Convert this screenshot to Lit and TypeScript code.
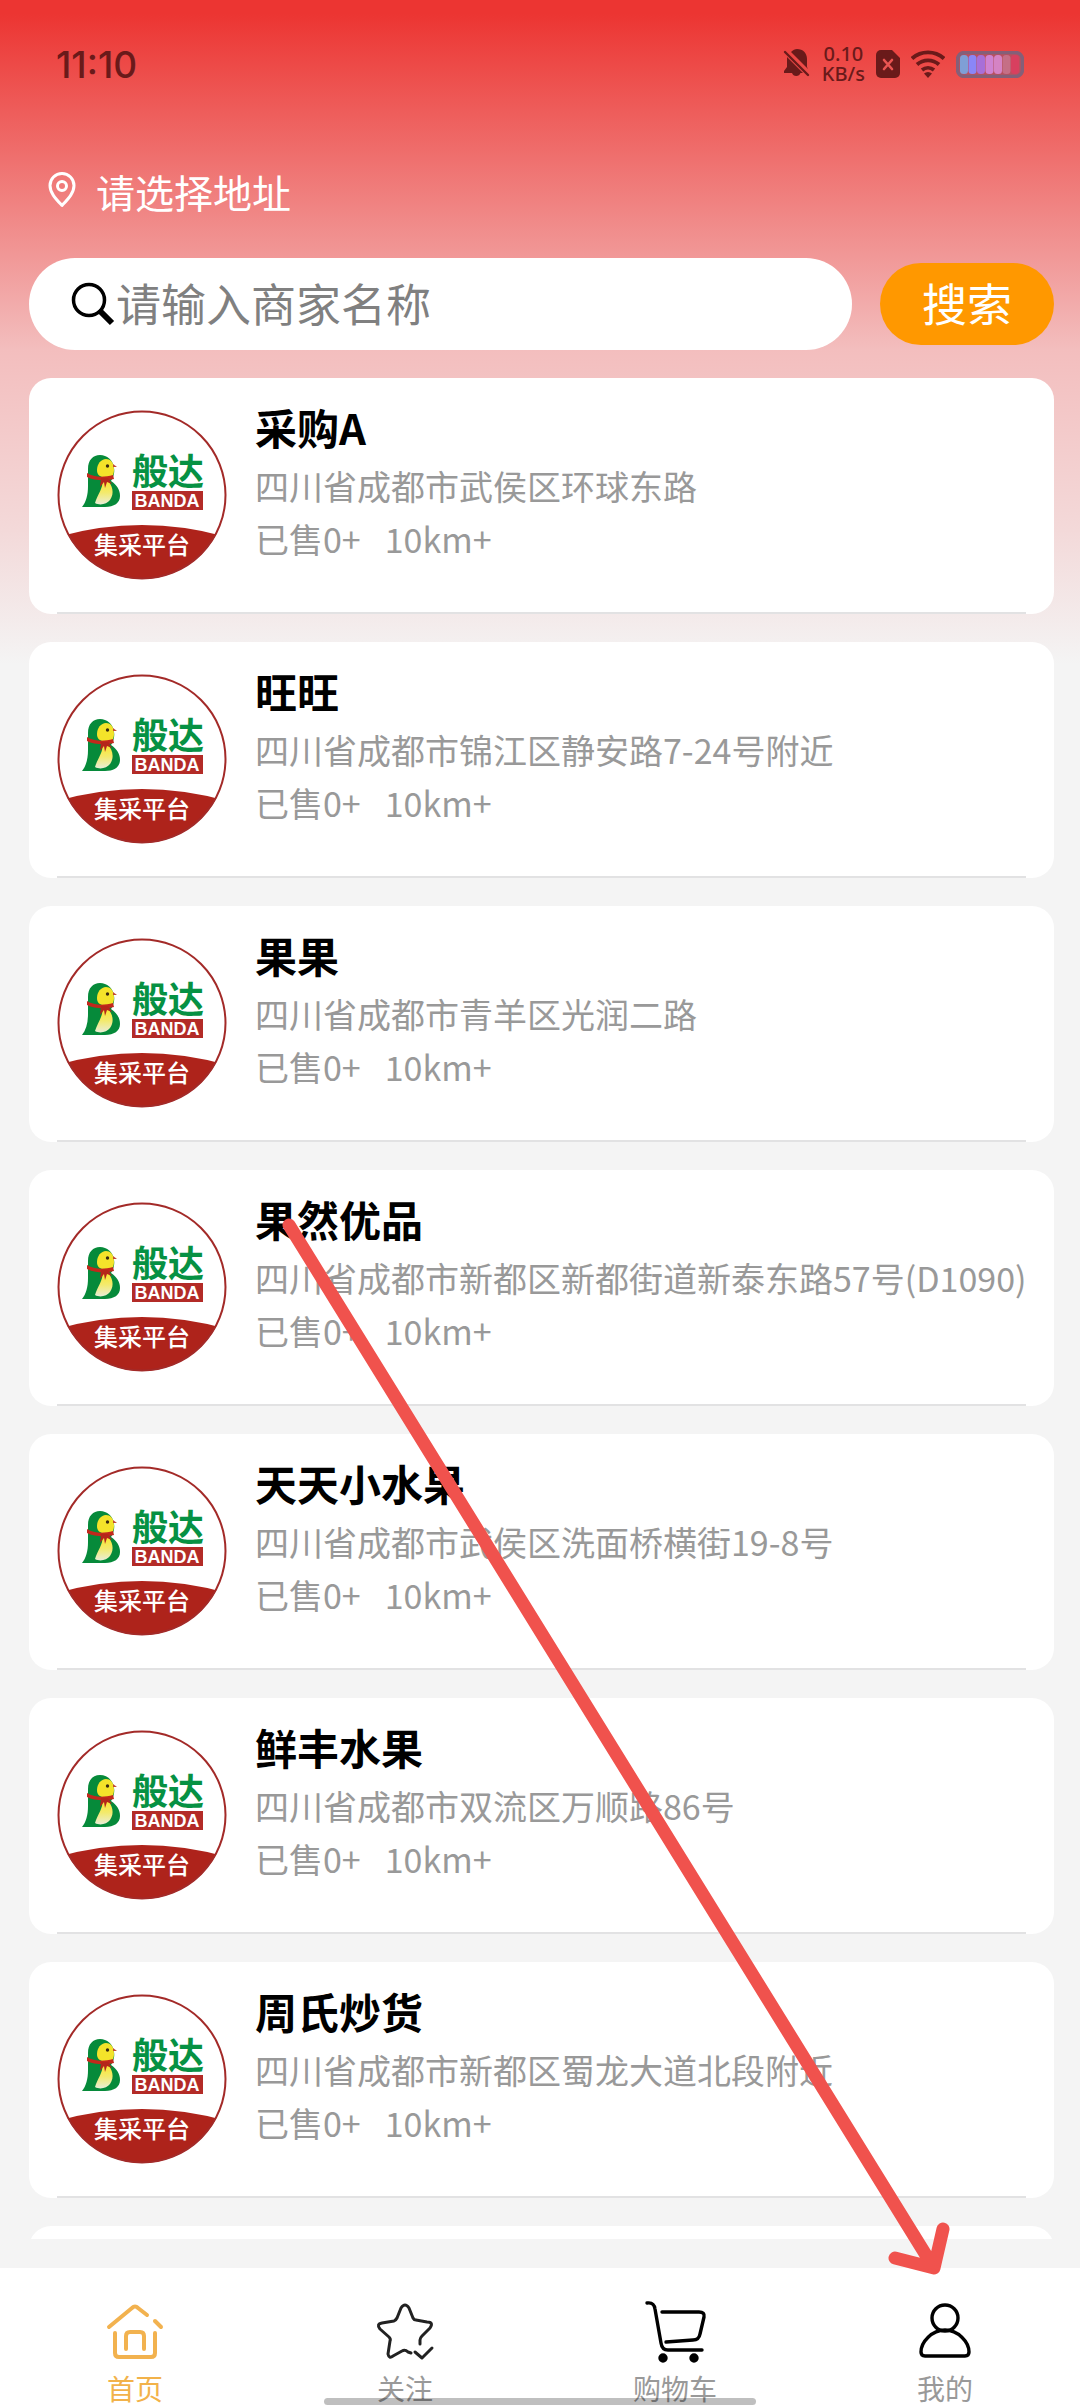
import { LitElement, css, html, svg } from 'lit'
import { customElement, property, state } from 'lit/decorators.js'
import { classMap } from 'lit/directives/class-map.js'

interface Shop {
  name: string
  address: string
}

interface Tab {
  key: string
  label: string
}

const SHOPS: Shop[] = [
  { name: '采购A', address: '四川省成都市武侯区环球东路' },
  { name: '旺旺', address: '四川省成都市锦江区静安路7-24号附近' },
  { name: '果果', address: '四川省成都市青羊区光润二路' },
  { name: '果然优品', address: '四川省成都市新都区新都街道新泰东路57号(D1090)' },
  { name: '天天小水果', address: '四川省成都市武侯区洗面桥横街19-8号' },
  { name: '鲜丰水果', address: '四川省成都市双流区万顺路86号' },
  { name: '周氏炒货', address: '四川省成都市新都区蜀龙大道北段附近' },
]

const TABS: Tab[] = [
  { key: 'home', label: '首页' },
  { key: 'follow', label: '关注' },
  { key: 'cart', label: '购物车' },
  { key: 'mine', label: '我的' },
]

const BATTERY_COLORS = ['#7f9fd6', '#8a86f7', '#a86fd8', '#cf83d2', '#d583c4', '#c56f86', '#d8405f']

@customElement('status-bar')
export class StatusBar extends LitElement {
  static styles = css`
    :host {
      display: flex;
      align-items: center;
      justify-content: space-between;
      height: 128px;
      padding: 0 56px;
      color: #6a1a1a;
    }

    .time {
      font-family: Inter, sans-serif;
      font-size: 37px;
      font-weight: 500;
    }

    .icons {
      display: flex;
      align-items: center;
      gap: 11px;
    }

    .speed {
      display: flex;
      flex-direction: column;
      align-items: center;
      font-family: 'Noto Sans', sans-serif;
      font-size: 20px;
      font-weight: 500;
      line-height: 20px;
    }

    svg {
      display: block;
    }
  `

  render() {
    return html`
      <span class="time">11:10</span>
      <div class="icons">
        <svg width="28" height="30" viewBox="0 0 28 30" fill="currentColor">
          <path d="M8 3C10 1 12 0 14 0c6 0 10 4 10 10v8l1 2Z" />
          <path d="M4 8l16 16h-2.5a4.5 4.5 0 0 1-8.500 0H1v-2l3-4Z" />
          <path d="M2 3l23 23" stroke="currentColor" stroke-width="2.4" stroke-linecap="round" />
        </svg>
        <div class="speed"><span>0.10</span><span>KB/s</span></div>
        <svg width="24" height="28" viewBox="0 0 24 28">
          <path d="M5 0h11l8 8v15a5 5 0 0 1-5 5H5a5 5 0 0 1-5-5V5a5 5 0 0 1 5-5Z" fill="currentColor" />
          <path d="M8 10l8 9M16 10l-8 9" stroke="#ea5552" stroke-width="2.6" stroke-linecap="round" />
        </svg>
        <svg width="34" height="28" viewBox="0 0 34 28" fill="none" stroke="currentColor" stroke-width="3.8">
          <path d="M1 8.5a24 24 0 0 1 32 0" />
          <path d="M6 14.5a16.5 16.5 0 0 1 22 0" />
          <path d="M11 20a9.5 9.5 0 0 1 12 0" />
          <path d="M17 28l-4-4.5a6 6 0 0 1 8 0Z" fill="currentColor" stroke="none" />
        </svg>
        <svg width="68" height="27" viewBox="0 0 68 27">
          <rect x="1.5" y="1.5" width="65" height="24" rx="7" fill="#b9505f" stroke="#855f78" stroke-width="3.5" />
          ${BATTERY_COLORS.map(
            (color, i) => svg`<rect x=${4 + i * 8.5} y="4" width="8" height="19" rx="3.5" fill=${color} />`
          )}
        </svg>
      </div>
    `
  }
}

@customElement('brand-logo')
export class BrandLogo extends LitElement {
  static styles = css`
    :host {
      display: block;
      flex: none;
      width: 170px;
      height: 170px;
    }

    svg {
      display: block;
      width: 100%;
      height: 100%;
      font-family: 'Noto Sans CJK SC', sans-serif;
    }

    .brand {
      font-size: 36px;
      font-weight: 700;
      fill: #069143;
    }

    .latin {
      font-family: 'Liberation Sans', sans-serif;
      font-size: 18px;
      font-weight: 700;
      fill: #fff;
    }

    .slogan {
      font-size: 24px;
      font-weight: 500;
      fill: #fff;
    }
  `

  render() {
    return html`
      <svg viewBox="0 0 170 170">
        <defs>
          <clipPath id="disc"><circle cx="85" cy="85" r="84" /></clipPath>
          <linearGradient id="belly" x1="0" y1="0" x2="0" y2="1">
            <stop offset="0" stop-color="#fbe62e" />
            <stop offset="0.5" stop-color="#f3ea6e" />
            <stop offset="1" stop-color="#e9edd8" />
          </linearGradient>
        </defs>
        <circle cx="85" cy="85" r="84" fill="#fff" />
        <path d="M0 127Q85 103 170 127V170H0Z" fill="#ae231b" clip-path="url(#disc)" />
        <circle cx="85" cy="85" r="83.5" fill="none" stroke="#a32a28" stroke-width="2" />

        <path
          d="M25 97C29 92 31 85 31 76L31 59C31 50 36 45 43 45C50 45 56 50 57 58C58 63 56 68 54 71C60 75 63 80 63 86C63 93 57 97 48 97Z"
          fill="#068a3a"
        />
        <path d="M57 60C57 52 53 49 49 49C44 49 40 54 40 60C40 64 42 66 45 67L55 67C56 65 57 63 57 60Z" fill="#f4e32a" />
        <path d="M45 72C47 76 40 86 38 93C43 96 50 94 53 90C58 83 55 75 51 71Z" fill="url(#belly)" />
        <path d="M56 54L60 57L56 57Z" fill="#c04a35" />
        <circle cx="50.5" cy="56" r="1.7" fill="#3a2a10" />
        <path d="M30 63C38 68 48 67 56 65L57 69C50 71 37 71 30 67Z" fill="#c2281c" />
        <path d="M44 68L43 77L47 72L48 78L50 72L55 74L51 68Z" fill="#b5261b" />

        <text class="brand" x="75" y="75">般达</text>
        <rect x="75" y="81" width="71" height="19" fill="#b32b27" />
        <text class="latin" x="110" y="97" text-anchor="middle">BANDA</text>
        <text class="slogan" x="85" y="144" text-anchor="middle">集采平台</text>
      </svg>
    `
  }
}

@customElement('shop-card')
export class ShopCard extends LitElement {
  @property({ attribute: false })
  shop?: Shop

  static styles = css`
    :host {
      display: block;
      flex: none;
      min-height: 236px;
      border-radius: 22px;
      background: #fff;
    }

    .link {
      display: flex;
      gap: 28px;
      padding: 32px 28px;
      color: inherit;
      text-decoration: none;
    }

    .info {
      flex: 1;
      min-width: 0;
    }

    .name {
      margin: 0 0 15px;
      color: #000;
      font-size: 42px;
      font-weight: 700;
      line-height: 34px;
    }

    .line {
      display: flex;
      gap: 24px;
      margin: 0;
      color: #999;
      font-size: 34px;
      font-weight: 400;
      line-height: 53px;
      white-space: nowrap;
    }

    .divider {
      height: 2px;
      margin: 0 28px;
      background: #e2e2e3;
    }
  `

  render() {
    if (!this.shop) {
      return html``
    }
    return html`
      <a class="link" href="#shop">
        <brand-logo></brand-logo>
        <div class="info">
          <h2 class="name">${this.shop.name}</h2>
          <p class="line">${this.shop.address}</p>
          <p class="line"><span>已售0+</span><span>10km+</span></p>
        </div>
      </a>
      <div class="divider"></div>
    `
  }
}

@customElement('tab-bar')
export class TabBar extends LitElement {
  @state()
  private active = 'home'

  static styles = css`
    :host {
      display: block;
      position: relative;
      flex: none;
      background: #fff;
    }

    .tabs {
      display: grid;
      grid-template-columns: repeat(4, 1fr);
      height: 140px;
    }

    .tab {
      display: flex;
      flex-direction: column;
      align-items: center;
      gap: 4px;
      padding-top: 32px;
      color: #999;
      font-size: 28px;
      line-height: 40px;
      text-decoration: none;
    }

    .tab.active {
      color: #f2b24a;
    }

    .tab svg {
      display: block;
      flex: none;
      width: 64px;
      height: 64px;
    }

    .indicator {
      position: absolute;
      bottom: 3px;
      left: 30%;
      width: 40%;
      height: 7px;
      border-radius: 4px;
      background: rgba(0, 0, 0, 0.25);
    }
  `

  private onSelect(key: string) {
    this.active = key
  }

  private renderIcon(key: string) {
    switch (key) {
      case 'home':
        return svg`
          <g stroke="#f2b24f" stroke-width="4">
            <path d="M6 27L29 8Q32 5 35 8L44 15" />
            <path d="M52 21L58 27" />
            <path d="M12 33V53Q12 57 16 57H48Q52 57 52 53V33" />
            <path d="M23 49V36Q23 32 27 32H37Q41 32 41 36V49" />
          </g>
        `
      case 'follow':
        return svg`
          <g stroke="#222" stroke-width="3">
            <path d="M47 44V40Q47 38 49 36L57 28Q61 22 54 22L43 20Q41 20 40 18L36 8Q32 2 28 8L24 18Q23 20 21 21L9 23Q3 24 7 29L16 37Q18 39 17 41L15 54Q16 59 20 56L29 51Q32 49 35 52L38 53" />
            <path d="M42 52L49 58L59 48" />
          </g>
        `
      case 'cart':
        return svg`
          <g stroke="#000" stroke-width="3.4">
            <path d="M4 3Q11 2 12 9L18 43Q19 50 25 50H59" />
            <path d="M19 12H56Q62 12 61 17L57 34Q56 40 50 40L23 42" />
            <circle cx="20" cy="58" r="3" fill="#000" />
            <circle cx="51" cy="58" r="3" fill="#000" />
          </g>
        `
      default:
        return svg`
          <g stroke="#000" stroke-width="3.4">
            <circle cx="32" cy="18" r="13" />
            <path d="M32 30C19 30 8 42 8 52Q8 56 12 56H52Q56 56 56 52C56 42 45 30 32 30Z" />
          </g>
        `
    }
  }

  render() {
    return html`
      <nav class="tabs">
        ${TABS.map(
          ({ key, label }) => html`
            <a
              class=${classMap({ tab: true, active: key === this.active })}
              href="#${key}"
              @click=${() => this.onSelect(key)}
            >
              <svg viewBox="0 0 64 64" fill="none" stroke-linecap="round" stroke-linejoin="round">
                ${this.renderIcon(key)}
              </svg>
              <span>${label}</span>
            </a>
          `
        )}
      </nav>
      <div class="indicator"></div>
    `
  }
}

@customElement('app-root')
export class AppRoot extends LitElement {
  @state()
  private keyword = ''

  static styles = css`
    :host {
      display: flex;
      flex-direction: column;
      position: relative;
      height: 100vh;
      overflow: hidden;
      background: linear-gradient(#ec3532 14px, #f3bebe 350px, #f3d9d9 530px, #f4f4f4 664px);
      font-family: 'Noto Sans CJK SC', sans-serif;
    }

    .location {
      display: flex;
      align-items: center;
      gap: 18px;
      height: 130px;
      padding: 0 46px 4px;
      border: 0;
      background: none;
      color: #fff;
      font: inherit;
      font-size: 39px;
      text-align: left;
    }

    .search {
      display: flex;
      align-items: center;
      gap: 28px;
      padding: 0 26px 0 29px;
    }

    .search-box {
      display: flex;
      flex: 1;
      align-items: center;
      min-width: 0;
      height: 92px;
      padding: 0 42px;
      border-radius: 46px;
      background: #fff;
    }

    .search-input {
      flex: 1;
      min-width: 0;
      padding: 0 0 4px;
      border: 0;
      outline: 0;
      background: none;
      color: #333;
      font: inherit;
      font-size: 45px;
    }

    .search-input::placeholder {
      color: #808080;
      opacity: 1;
    }

    .search-button {
      width: 174px;
      height: 82px;
      padding: 0 0 4px;
      border: 0;
      border-radius: 41px;
      background: #ff9800;
      color: #fff;
      font: inherit;
      font-size: 45px;
    }

    .list {
      display: flex;
      flex: 1;
      flex-direction: column;
      gap: 28px;
      min-height: 0;
      margin: 28px 0 29px;
      padding: 0 26px 0 29px;
      overflow-y: auto;
      scrollbar-width: none;
    }

    svg {
      display: block;
      flex: none;
    }

    .arrow {
      position: absolute;
      top: 1215px;
      left: 280px;
      pointer-events: none;
    }
  `

  private onInput(e: Event) {
    this.keyword = (e.target as HTMLInputElement).value
  }

  render() {
    return html`
      <status-bar></status-bar>
      <button class="location">
        <svg width="32" height="40" viewBox="0 0 32 40" fill="none" stroke="#fff" stroke-width="3">
          <path d="M16 34.5C10 28 4 22 4 14.5a12 12 0 0 1 24 0C28 22 22 28 16 34.5Z" stroke-linejoin="round" />
          <circle cx="16" cy="15" r="4.5" />
        </svg>
        请选择地址
      </button>
      <div class="search">
        <label class="search-box">
          <svg width="45" height="44" viewBox="0 0 45 44" fill="none" stroke="#000">
            <circle cx="18" cy="18" r="15.5" stroke-width="3.5" />
            <path d="M28 28L41 41" stroke-width="6" />
          </svg>
          <input
            class="search-input"
            type="text"
            placeholder="请输入商家名称"
            .value=${this.keyword}
            @input=${this.onInput}
          />
        </label>
        <button class="search-button">搜索</button>
      </div>
      <div class="list">
        ${SHOPS.map((shop: Shop) => html`<shop-card .shop=${shop}></shop-card>`)}
        <shop-card></shop-card>
      </div>
      <tab-bar></tab-bar>
      <svg
        class="arrow"
        width="690"
        height="1070"
        viewBox="0 0 690 1070"
        fill="none"
        stroke="#f0524d"
        stroke-width="13"
        stroke-linecap="round"
        stroke-linejoin="round"
      >
        <path d="M9 10L654 1053M663 1014L654 1053L615 1043" />
      </svg>
    `
  }
}
